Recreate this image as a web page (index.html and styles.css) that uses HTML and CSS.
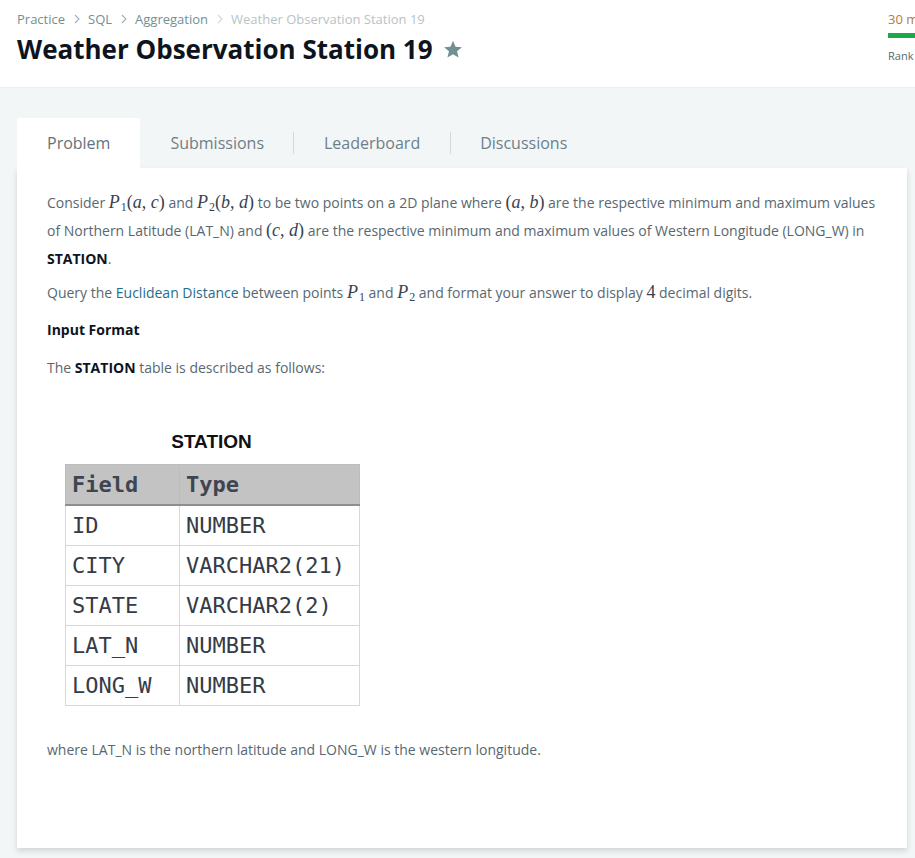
FILE: index.html
```html
<!DOCTYPE html>
<html>
<head>
<meta charset="utf-8">
<link rel="stylesheet" href="styles.css">
</head>
<body>
<header class="top">
  <div class="head-left">
    <nav class="crumbs">
      <span class="crumb">Practice</span>
      <svg class="chev" width="8" height="10" viewBox="0 0 8 10"><path d="M2 1 L6 5 L2 9" fill="none" stroke="#9fb0b5" stroke-width="1.1"/></svg>
      <span class="crumb">SQL</span>
      <svg class="chev" width="8" height="10" viewBox="0 0 8 10"><path d="M2 1 L6 5 L2 9" fill="none" stroke="#9fb0b5" stroke-width="1.1"/></svg>
      <span class="crumb">Aggregation</span>
      <svg class="chev" width="8" height="10" viewBox="0 0 8 10"><path d="M2 1 L6 5 L2 9" fill="none" stroke="#d0d8db" stroke-width="1.1"/></svg>
      <span class="crumb current">Weather Observation Station 19</span>
    </nav>
    <h1 class="title">Weather Observation Station 19
      <svg class="star" width="20" height="19" viewBox="0 0 24 23"><path d="M12 1 L15.1 8.1 L22.8 8.7 L16.9 13.7 L18.7 21.3 L12 17.2 L5.3 21.3 L7.1 13.7 L1.2 8.7 L8.9 8.1 Z" fill="#738f93"/></svg>
    </h1>
  </div>
  <div class="head-right">
    <div class="pts">30 m</div>
    <div class="bar"></div>
    <div class="rank">Rank</div>
  </div>
</header>

<main class="page">
  <div class="tabs">
    <div class="tab active">Problem</div>
    <div class="tab">Submissions</div>
    <span class="sep"></span>
    <div class="tab">Leaderboard</div>
    <span class="sep"></span>
    <div class="tab">Discussions</div>
  </div>
  <section class="card">
    <p class="p1">Consider <span class="m"><i>P</i><sub>1</sub>(<i>a</i>, <i>c</i>)</span> and <span class="m"><i>P</i><sub>2</sub>(<i>b</i>, <i>d</i>)</span> to be two points on a 2D plane where <span class="m">(<i>a</i>, <i>b</i>)</span> are the respective minimum and maximum values of Northern Latitude (LAT_N) and <span class="m">(<i>c</i>, <i>d</i>)</span> are the respective minimum and maximum values of Western Longitude (LONG_W) in <strong>STATION</strong>.</p>
    <p class="p2">Query the <a class="link">Euclidean Distance</a> between points <span class="m"><i>P</i><sub>1</sub></span> and <span class="m"><i>P</i><sub>2</sub></span> and format your answer to display <span class="m">4</span> decimal digits.</p>
    <p class="h">Input Format</p>
    <p class="p3">The <strong>STATION</strong> table is described as follows:</p>
    <div class="schema">
      <div class="cap">STATION</div>
      <table class="tbl">
        <thead><tr><th class="c1">Field</th><th class="c2">Type</th></tr></thead>
        <tbody>
          <tr><td>ID</td><td>NUMBER</td></tr>
          <tr><td>CITY</td><td>VARCHAR2(21)</td></tr>
          <tr><td>STATE</td><td>VARCHAR2(2)</td></tr>
          <tr><td>LAT_N</td><td>NUMBER</td></tr>
          <tr><td>LONG_W</td><td>NUMBER</td></tr>
        </tbody>
      </table>
    </div>
    <p class="p4">where LAT_N is the northern latitude and LONG_W is the western longitude.</p>
  </section>
</main>
</body>
</html>
```

FILE: styles.css
```css
html, body {
  margin: 0;
  padding: 0;
}
body {
  font-family: "Open Sans", "Noto Sans", sans-serif;
  background: #f3f6f7;
  width: 915px;
  height: 858px;
  overflow: hidden;
}
.top {
  background: #fff;
  height: 88px;
  border-bottom: 1px solid #eceff0;
  box-sizing: border-box;
  display: flex;
  justify-content: space-between;
  overflow: hidden;
}
.head-left {
  padding: 10px 0 0 17px;
}
.crumbs {
  display: flex;
  align-items: center;
  font-size: 13px;
  line-height: 18px;
  color: #738f93;
}
.chev {
  margin: 0 7px 0 8px;
}
.crumb.current {
  color: #b7c3c7;
}
.title {
  margin: 4px 0 0 0;
  font-size: 26px;
  line-height: 34px;
  font-weight: 700;
  color: #0e141e;
  display: flex;
  align-items: center;
}
.star {
  margin-left: 10px;
  margin-top: 1px;
}
.head-right {
  width: 27px;
  overflow: hidden;
  padding-top: 10px;
  white-space: nowrap;
}
.pts {
  font-size: 13px;
  line-height: 18px;
  color: #b5793f;
}
.bar {
  height: 5px;
  background: #1ba94c;
  margin-top: 5px;
}
.rank {
  font-size: 11px;
  line-height: 14px;
  margin-top: 11px;
  color: #576871;
}
.page {
  padding: 30px 8px 0 17px;
}
.tabs {
  display: flex;
  align-items: center;
  height: 50px;
}
.tab {
  height: 50px;
  line-height: 51px;
  padding: 0 30px;
  font-size: 16px;
  color: #6d7f88;
}
.tab.active {
  background: #fff;
  color: #62737c;
}
.tab:nth-child(2) { padding-right: 29px; }
.tab:last-child { padding-left: 29px; }
.sep {
  width: 1px;
  height: 22px;
  background: #d3dadd;
}
.card {
  background: #fff;
  height: 680px;
  box-sizing: border-box;
  padding: 21px 24px 0 30px;
  box-shadow: 0 3px 6px rgba(0, 0, 0, 0.14);
  font-size: 14px;
  line-height: 28px;
  color: #576871;
}
.card p {
  margin: 0;
}
.p1 { margin-bottom: 6px !important; }
.p2 { margin-bottom: 9px !important; }
.h {
  font-weight: 700;
  color: #0e141e;
  margin-bottom: 10px !important;
}
.card strong {
  color: #0e141e;
  font-weight: 700;
}
.link {
  color: #1f6d8f;
}
.m {
  font-family: "Liberation Serif", "DejaVu Serif", serif;
  font-size: 18px;
  line-height: 1;
  color: #39424e;
  white-space: nowrap;
}
.m i {
  font-style: italic;
}
.m sub {
  font-size: 12px;
  vertical-align: -3px;
  line-height: 0;
  margin-left: 1px;
}
.schema {
  margin: 48px 0 0 18px;
  width: 295px;
}
.cap {
  text-align: center;
  font-family: "Liberation Sans", Arial, sans-serif;
  font-weight: 700;
  font-size: 19px;
  line-height: 24px;
  color: #111;
  margin-bottom: 10px;
  padding-right: 2px;
}
.tbl {
  border-collapse: collapse;
  width: 295px;
  font-family: "DejaVu Sans Mono", "Liberation Mono", monospace;
  font-size: 22px;
  line-height: 36px;
  color: #353b47;
}
.tbl th, .tbl td {
  border: 1px solid #d8d8d8;
  text-align: left;
  padding: 0 0 0 6px;
  height: 39px;
  font-weight: 400;
}
.tbl th {
  background: #c3c3c3;
  font-weight: 700;
  color: #3f4550;
  border-color: #bdbdbd;
  border-bottom: 2px solid #8f8f8f;
}
.tbl .c1 { width: 107px; }
.p4 {
  margin-top: 30px !important;
}
```
